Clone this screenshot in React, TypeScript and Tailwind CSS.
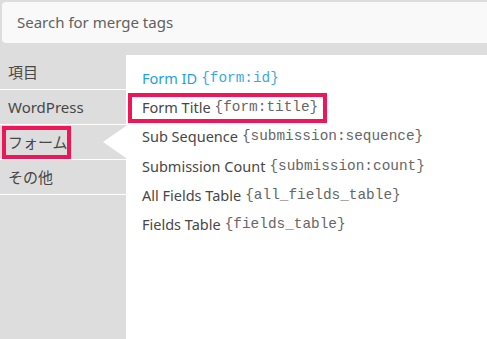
import React from "react";

const groups = ["項目", "WordPress", "フォーム", "その他"];

const tags = [
  { label: "Form ID", code: "{form:id}", active: true },
  { label: "Form Title", code: "{form:title}", marked: true },
  { label: "Sub Sequence", code: "{submission:sequence}" },
  { label: "Submission Count", code: "{submission:count}" },
  { label: "All Fields Table", code: "{all_fields_table}" },
  { label: "Fields Table", code: "{fields_table}" },
];

const sans = "font-['Segoe_UI','Noto_Sans','Noto_Sans_CJK_JP',sans-serif]";

export default function App() {
  return (
    <div className={`w-[487px] h-[339px] bg-[#dcdddc] overflow-hidden flex flex-col ${sans}`}>
      {/* Search */}
      <div className="mt-[2px] ml-[2px] -mr-[6px] h-[41px] shrink-0 rounded-[4px] bg-[#f9f9f9] flex items-center pl-[15px]">
        <span className="text-[15px] text-[#616161]">Search for merge tags</span>
      </div>

      <div className="mt-[12px] flex flex-1">
        {/* Group list */}
        <ul className="w-[126px] shrink-0">
          {groups.map((g, i) => (
            <li
              key={g}
              className="relative h-[35px] border-b border-white flex items-center pl-[8px] text-[15px] text-[#474747]"
            >
              {g}
              {i === 2 && (
                <>
                  <span className="absolute left-[2px] top-[1px] w-[69px] h-[33px] border-[4px] border-[#ee1657]" />
                  <span className="absolute right-0 top-1/2 -translate-y-1/2 w-0 h-0 border-y-[16px] border-y-transparent border-r-[23px] border-r-white" />
                </>
              )}
            </li>
          ))}
        </ul>

        {/* Tags */}
        <div className="flex-1 bg-white pt-[9px]">
          {tags.map((t) => (
            <div key={t.code} className="relative h-[29.3px] flex items-center pl-[16px] whitespace-nowrap">
              <span className={`text-[14.5px] ${t.active ? "text-[#1e9fe3]" : "text-[#474747]"}`}>{t.label}</span>
              <span
                className={`ml-[4px] font-['Liberation_Mono','Courier_New',monospace] text-[14.4px] ${
                  t.active ? "text-[#3aa9e6]" : "text-[#666]"
                }`}
              >
                {t.code}
              </span>
              {t.marked && (
                <span className="absolute left-[2px] top-0 w-[199px] h-[30px] border-[4px] border-[#ee1657]" />
              )}
            </div>
          ))}
        </div>
      </div>
    </div>
  );
}
